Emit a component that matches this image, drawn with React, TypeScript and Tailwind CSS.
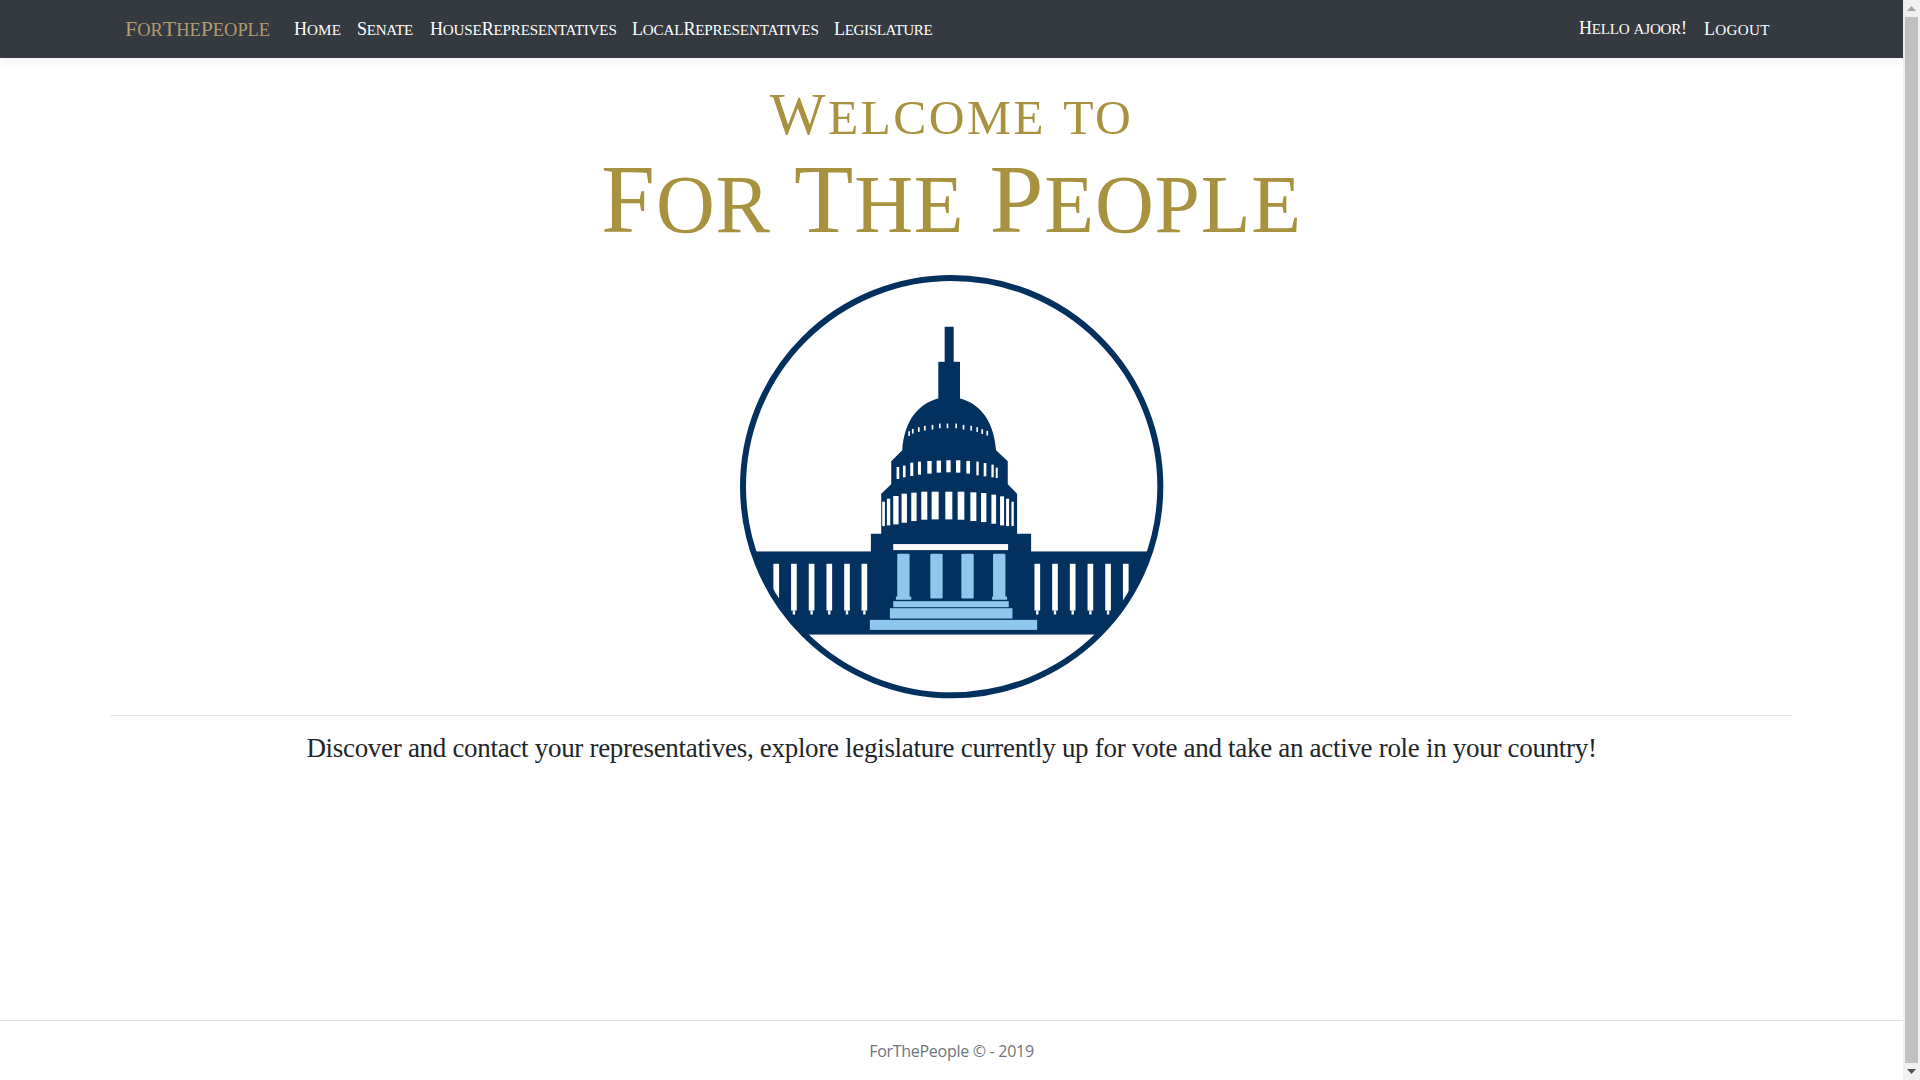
const navy = "#023160";
const sky = "#8fc7ec";

const domeSmall = [[147,370],[158,363],[176,358],[194,354],[217,351],[239,347],[262,347],[288,347],[310,351],[333,354],[351,358],[366,364],[381,369]];
const midTier = [[499,507,620,656],[518,526,616,651],[540,549,607,647],[563,572,604,643],[591,604,602,640],[619,632,601,637],[648,661,600,636],[677,690,600,637],[708,719,602,640],[738,745,604,645],[760,768,608,648],[783,790,613,651],[796,802,622,653]];
const lowTier = [[456,464,724,797],[470,480,715,795],[489,505,707,792],[514,530,700,787],[543,559,697,782],[573,591,694,778],[604,625,694,777],[645,666,694,777],[682,702,694,778],[720,738,696,782],[752,768,698,785],[783,797,703,790],[809,821,708,795],[827,836,715,797],[843,850,724,797]];
const wingWindows = [130,183,236,289,342,394,912,965,1018,1071,1124,1177];

function CapitolLogo() {
  return (
    <svg viewBox="30 45 1270 1270" width="424" height="424" className="block shrink-0">
      <defs>
        <clipPath id="inner"><circle cx="664" cy="679" r="625" /></clipPath>
        <clipPath id="inset"><circle cx="664" cy="679" r="616" /></clipPath>
      </defs>
      <circle cx="664" cy="679" r="625" fill="#fff" stroke={navy} strokeWidth="18" />
      <g clipPath="url(#inner)">
        <rect x="30" y="873" width="1270" height="249" fill={navy} />
      </g>
      <rect x="643" y="200" width="27" height="110" fill={navy} />
      <rect x="624" y="305" width="65" height="115" fill={navy} />
      <path
        fill={navy}
        d="M624 415C565 430 522 480 516 570L483 603V672L453 700V820H422V880H902V820H860V700L832 672V603L797 570C790 480 748 430 689 415Z"
      />
      {domeSmall.map(([x, y], i) => (
        <rect key={i} x={x + 387} y={y + 143} width="5" height="14" fill="#fff" />
      ))}
      {midTier.map(([a, b, c, d], i) => (
        <rect key={i} x={a} y={c} width={b - a} height={d - c} fill="#fff" />
      ))}
      {lowTier.map(([a, b, c, d], i) => (
        <rect key={i} x={a} y={c} width={b - a} height={d - c} fill="#fff" />
      ))}
      <g clipPath="url(#inset)">
        {wingWindows.map((x) => (
          <g key={x} fill="#fff">
            <rect x={x} y="910" width="17" height="140" />
            <rect x={x + 5} y="1050" width="7" height="12" />
          </g>
        ))}
      </g>
      <rect x="489" y="851" width="344" height="18" fill="#fff" />
      <g fill={sky}>
        <rect x="501" y="880" width="37" height="130" rx="3" />
        <rect x="497" y="1008" width="46" height="10" rx="2" />
        <rect x="600" y="880" width="37" height="134" rx="3" />
        <rect x="693" y="880" width="37" height="134" rx="3" />
        <rect x="788" y="880" width="37" height="130" rx="3" />
        <rect x="785" y="1008" width="45" height="10" rx="2" />
        <rect x="489" y="1022" width="346" height="18" />
        <rect x="479" y="1043" width="367" height="31" />
        <rect x="419" y="1078" width="501" height="30" />
      </g>
    </svg>
  );
}

/* Small caps in the manner of the reference's display faces: lower-case letters shown as slightly reduced capitals. */
function Sc({ text }: { text: string }) {
  const parts = text.match(/[a-z]+|[^a-z]+/g) ?? [];
  return (
    <>
      {parts.map((p, i) =>
        /[a-z]/.test(p) ? (
          <span key={i} className="uppercase text-[0.84em] leading-none">{p}</span>
        ) : (
          <span key={i}>{p}</span>
        )
      )}
    </>
  );
}

const serif = "font-['Liberation_Serif',serif]";

function NavLink({ text, className }: { text: string; className: string }) {
  return (
    <a className={`text-white text-[18px] leading-none whitespace-nowrap ${serif} ${className}`}>
      <Sc text={text} />
    </a>
  );
}

export default function App() {
  return (
    <div className="flex h-screen w-full overflow-hidden bg-white">
      <div className="flex min-w-0 flex-1 flex-col">
        <nav className="relative z-10 flex h-[58px] shrink-0 items-center bg-[#343a40] pl-[125px] pr-[134px] shadow-[0_4px_12px_rgba(0,0,0,0.06)]">
          <a className={`mr-[24px] w-[145px] whitespace-nowrap text-[#b09a70] text-[22px] leading-none tracking-[-0.05px] ${serif}`}>
            <Sc text="ForThePeople" />
          </a>
          <div className="flex gap-[16px]">
            <NavLink className="w-[47px] tracking-[0.1px]" text="Home" />
            <NavLink className="w-[57px] tracking-[-0.3px]" text="Senate" />
            <NavLink className="w-[186px] tracking-[-0.17px]" text="HouseRepresentatives" />
            <NavLink className="w-[186px] tracking-[-0.15px]" text="LocalRepresentatives" />
            <NavLink className="w-[99px] tracking-[-0.37px]" text="Legislature" />
          </div>
          <div className="ml-auto flex gap-[18px]">
            <NavLink className="w-[107px] -translate-y-px tracking-[-0.25px]" text="Hello ajoor!" />
            <NavLink className="w-[65px] tracking-[0.3px]" text="Logout" />
          </div>
        </nav>

        <main className="flex min-h-0 flex-1 flex-col items-center px-[110px]">
          <h1 className={`mt-[25px] text-[#a8923f] text-[59px] leading-[62px] tracking-[2.4px] ${serif}`}>
            <Sc text="Welcome to" />
          </h1>
          <h2 className={`mt-[3px] text-[#a8923f] text-[97px] leading-[104px] tracking-[0.83px] ${serif}`}>
            <Sc text="For The People" />
          </h2>
          <div className="mt-[23px]">
            <CapitolLogo />
          </div>
          <hr className="mt-[16px] w-full border-0 border-t border-[#e4e5e6]" />
          <p className={`mt-[14px] whitespace-nowrap text-[#212529] text-[27px] leading-[36px] tracking-[-0.3px] ${serif}`}>
            Discover and contact your representatives, explore legislature currently up for vote and take an active role in your country!
          </p>
        </main>

        <footer className="flex h-[60px] shrink-0 items-center justify-center border-t border-[#dee2e6] text-[#6c757d] text-[16px] tracking-[-0.29px] font-['Open_Sans',sans-serif]">
          ForThePeople © - 2019
        </footer>
      </div>

      <aside className="flex w-[17px] shrink-0 flex-col bg-[#f1f1f1]">
        <div className="flex h-[17px] items-center justify-center">
          <svg width="9" height="5" viewBox="0 0 9 5"><path d="M4.5 0L9 5H0Z" fill="#a3a3a3" /></svg>
        </div>
        <div className="mx-auto w-[13px] flex-1 bg-[#c1c1c1]" />
        <div className="flex h-[17px] items-center justify-center">
          <svg width="9" height="5" viewBox="0 0 9 5"><path d="M0 0H9L4.5 5Z" fill="#505050" /></svg>
        </div>
      </aside>
    </div>
  );
}
